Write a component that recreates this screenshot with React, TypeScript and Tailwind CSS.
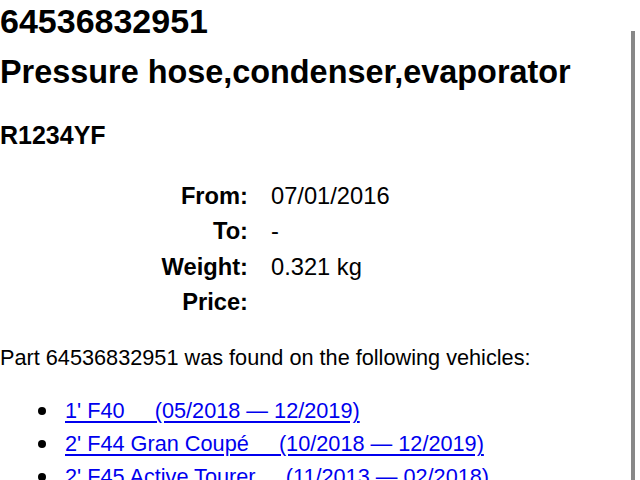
import React from "react";

const rows: [string, string][] = [
  ["From:", "07/01/2016"],
  ["To:", "-"],
  ["Weight:", "0.321 kg"],
  ["Price:", ""],
];

const vehicles = [
  "1' F40\u00a0\u00a0\u00a0\u00a0\u00a0(05/2018 \u2014 12/2019)",
  "2' F44 Gran Coup\u00e9\u00a0\u00a0\u00a0\u00a0\u00a0(10/2018 \u2014 12/2019)",
  "2' F45 Active Tourer\u00a0\u00a0\u00a0\u00a0\u00a0(11/2013 \u2014 02/2018)",
];

export default function App() {
  return (
    <div className="relative h-[480px] w-[640px] overflow-hidden bg-white text-black font-['Liberation_Sans',Arial,sans-serif]">
      <div className="flex flex-col">
        <h1 className="text-[34px] font-bold leading-[42px]">64536832951</h1>
        <h2 className="mt-[10px] text-[32.4px] font-bold leading-[40px]">
          Pressure hose,condenser,evaporator
        </h2>
        <h3 className="mt-[28px] text-[25px] font-bold leading-[30px]">R1234YF</h3>
        <div className="mt-[29px] grid grid-cols-[248px_1fr] gap-x-[23px] text-[23.7px] leading-[35.33px]">
          {rows.map(([k, v]) => (
            <React.Fragment key={k}>
              <div className="text-right font-bold">{k}</div>
              <div>{v}</div>
            </React.Fragment>
          ))}
        </div>
        <p className="mt-[24px] text-[21.7px] leading-[28px]">
          Part 64536832951 was found on the following vehicles:
        </p>
        <ul className="mt-[22px] flex flex-col text-[21.7px] leading-[33px]">
          {vehicles.map((v) => (
            <li key={v} className="flex items-center">
              <span className="ml-[38px] mr-[19px] h-[8px] w-[8px] rounded-full bg-black" />
              <a href="#" className="text-[#0000ee] underline underline-offset-[3px]">
                {v}
              </a>
            </li>
          ))}
        </ul>
      </div>
      <div className="absolute right-[5px] top-[31px] h-[460px] w-[4px] bg-[#888888]" />
    </div>
  );
}
